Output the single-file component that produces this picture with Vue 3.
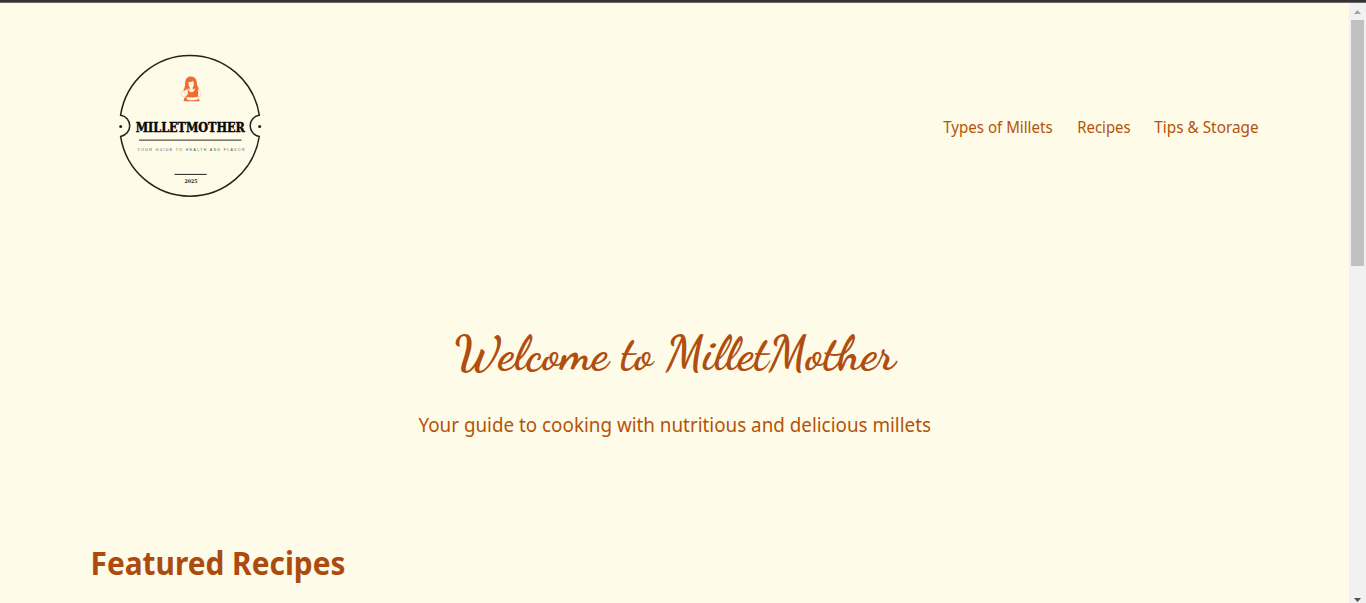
<script setup>
const links = [
  { label: 'Types of Millets', width: 110 },
  { label: 'Recipes', width: 54 },
  { label: 'Tips & Storage', width: 105 },
]
</script>

<template>
  <div class="window">
    <main class="page">
      <header class="header">
        <svg class="logo" width="160" height="160" viewBox="110 45 160 160">
          <g fill="none" stroke="#24231d" stroke-width="1.5">
            <path d="M120.6 115.4A70.2 70.2 0 0 1 259.3 115.4A10.6 10.6 0 0 0 259.3 136.4A70.2 70.2 0 0 1 120.6 136.4A10.6 10.6 0 0 0 120.6 115.4Z" transform="matrix(1 0 0 1.008 0 -1.1)" />
            <path d="M139 140.1H241.5" stroke="#55534a" stroke-width="1.4" />
            <path d="M174.5 174.4H206.7" stroke-width="1" />
          </g>
          <circle cx="120.7" cy="126.5" r="1.5" fill="#222" />
          <circle cx="259.7" cy="126.5" r="1.5" fill="#222" />
          <g class="cook">
            <path d="M185.3 90.2C184 91.8 182.8 90.4 184 88.4C185.6 86.2 184.6 84.6 185.4 81.2C186 78 188 76.5 190.8 76.6C194.4 76.6 196.3 78.8 196.8 82.2C197.2 85.4 197.2 86.2 198.6 88C199.4 90 197.6 91.2 196.2 90L194 88.4C192.6 91.6 189.8 91.4 188.6 88.6Z" fill="#ed6b35" />
            <path d="M187.5 88.5L189.5 91.6C190.8 92.6 192.6 92.4 193.8 91.2L195.4 88.8L198.2 90.8L198.1 97.2L184.9 97.3L187.9 94Z" fill="#ed6b35" />
            <path d="M188.7 82C190.2 82.2 192 81.7 192.9 80.8C193.7 82 194 83.5 193.8 85C193.5 86.7 192.9 87.5 192.6 88.1L193.2 90.2C192 91.8 190.4 91.8 189.3 90.2L190 88C188.8 86.5 188.2 84 188.7 82Z" fill="#fdf4df" />
            <path d="M184.4 97.5L198.7 97.3L199.6 101.2H183.5Z" fill="#ed6b35" />
            <path d="M187 97.1Q193 98.6 199 96.6L198.6 99.2Q193 101.1 187.2 99.8Z" fill="#fefbe8" />
            <path d="M185.6 88.8C181.5 90 179.8 92.9 181.4 95.4L186.8 98.7M196.7 88.6C200.7 90.2 201.8 94.1 199.7 96.7L197.3 97.8M182.8 91.6L188.6 95.1" fill="none" stroke="#f3bd98" stroke-width=".5" />
          </g>
          <text class="brand" x="135.7" y="131.6" textLength="109.2" lengthAdjust="spacingAndGlyphs">MILLETMOTHER</text>
          <text class="tagline" x="137.5" y="150.6" textLength="107">YOUR GUIDE TO HEALTH AND FLAVOR</text>
          <text class="year" x="184.5" y="182.9" textLength="13" lengthAdjust="spacingAndGlyphs">2025</text>
        </svg>
        <nav class="nav">
          <a v-for="link in links" :key="link.label">
            <svg :width="link.width" height="24">
              <text x="0.3" y="17" :textLength="link.width - 0.7" lengthAdjust="spacingAndGlyphs">{{ link.label }}</text>
            </svg>
          </a>
        </nav>
      </header>
      <section class="hero">
        <h1>
          <svg width="450" height="70">
            <text x="4" y="45" textLength="441.5" lengthAdjust="spacingAndGlyphs">Welcome to MilletMother</text>
          </svg>
        </h1>
        <p>
          <svg width="514" height="32">
            <text x="0.5" y="23" textLength="512.5" lengthAdjust="spacingAndGlyphs">Your guide to cooking with nutritious and delicious millets</text>
          </svg>
        </p>
      </section>
      <section class="featured">
        <h2>
          <svg width="270" height="48">
            <text x="-0.5" y="35" textLength="255" lengthAdjust="spacingAndGlyphs">Featured Recipes</text>
          </svg>
        </h2>
      </section>
    </main>
    <aside class="scrollbar">
      <svg width="17" height="17"><path d="M5 11L8.5 7L12 11Z" fill="#a3a3a3" /></svg>
      <div class="thumb"></div>
      <svg class="down" width="17" height="5"><path d="M5 0H12L8.5 4Z" fill="#505050" /></svg>
    </aside>
  </div>
</template>

<style>
body { margin: 0; background: #fefbe8; overflow: hidden; }
</style>

<style scoped>
.window {
  box-sizing: border-box;
  height: 603px;
  padding-top: 1px;
  display: flex;
  border-top: 2px solid #353334;
  background: linear-gradient(#6b6867 1px, #fefbe8 1px);
  font-family: "Segoe UI", "Noto Sans", sans-serif;
}
svg { display: block; overflow: visible; }
.page { width: 1349px; }
.header {
  height: 160px;
  padding: 42px 90px 0 110px;
  display: flex;
  justify-content: space-between;
  align-items: flex-start;
}
.nav { display: flex; gap: 23.5px; padding-top: 71px; }
.nav text { font-size: 15.5px; fill: #b45309; }
.hero {
  padding-top: 119px;
  display: flex;
  flex-direction: column;
  align-items: center;
}
h1, h2, p { margin: 0; }
h1 text {
  font: 700 48px "Dancing Script", cursive;
  fill: #b04e0f;
}
p { margin-top: 15px; }
p text { font-size: 19.3px; fill: #b45309; }
.featured { padding: 99px 91px 0; }
h2 text { font-size: 31.5px; font-weight: 700; fill: #ac4b10; }
.brand { font: 700 12.1px "DejaVu Serif", serif; fill: #080808; stroke: #080808; stroke-width: .45px; }
.tagline { font: 3.6px "Liberation Sans", sans-serif; fill: #55534a; }
.year { font: 700 5px "DejaVu Serif", serif; fill: #222; }
.scrollbar {
  width: 17px;
  display: flex;
  flex-direction: column;
  align-items: center;
  background: #f1f1f1;
}
.thumb { width: 13px; height: 246px; background: #c1c1c1; }
.down { margin-top: auto; }
</style>
